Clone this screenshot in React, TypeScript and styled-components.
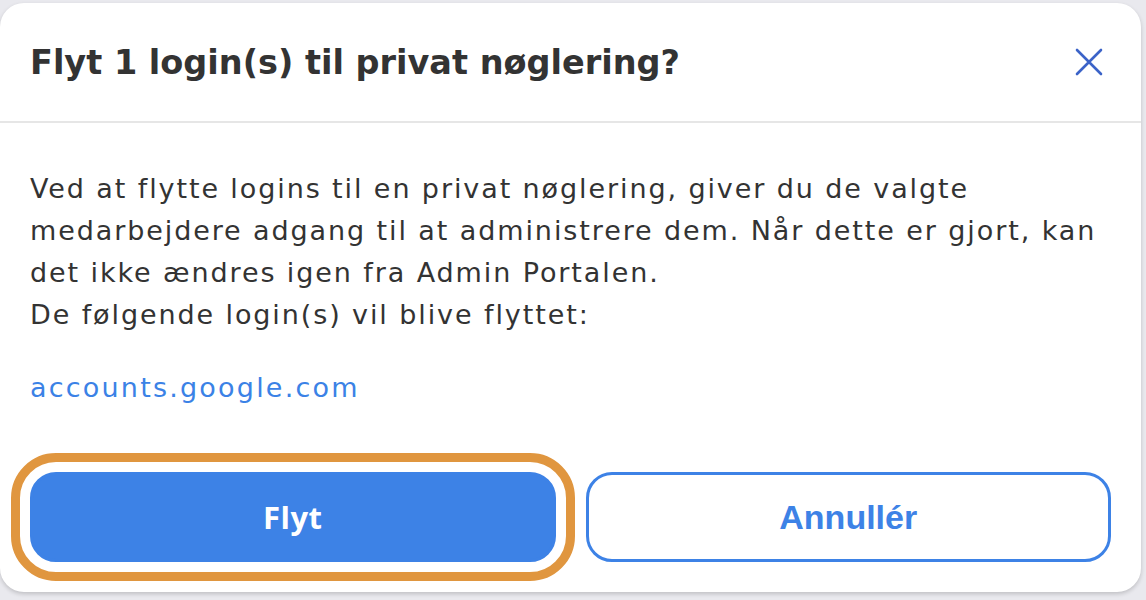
import React from "react";
import styled, { createGlobalStyle } from "styled-components";

const Global = createGlobalStyle`
  html, body { margin: 0; padding: 0; background: #e9e9ee; }
  body { font-family: "DejaVu Sans", "Open Sans", sans-serif; }
  * { box-sizing: border-box; }
`;

const Page = styled.div`
  width: 1146px;
  height: 600px;
  padding: 3px 5px 8px 0;
  display: flex;
`;

const Card = styled.div`
  flex: 1;
  background: #ffffff;
  border-radius: 24px;
  box-shadow: 0 2px 4px rgba(0, 0, 0, 0.18);
  display: flex;
  flex-direction: column;
`;

const Header = styled.div`
  height: 120px;
  border-bottom: 2px solid #e6e6e6;
  display: flex;
  align-items: center;
  justify-content: space-between;
  padding: 0 38px 0 30px;
`;

const Title = styled.h1`
  margin: 0;
  font-family: "DejaVu Sans", sans-serif;
  font-weight: 700;
  font-size: 33.5px;
  color: #333333;
`;

const CloseButton = styled.button`
  border: none;
  background: none;
  padding: 0;
  width: 28px;
  height: 28px;
  display: flex;
  align-items: center;
  justify-content: center;
  cursor: pointer;
`;

const Body = styled.div`
  padding: 45px 30px 30px 30px;
  display: flex;
  flex-direction: column;
  flex: 1;
`;

const Text = styled.p`
  margin: 0;
  font-family: "DejaVu Sans", sans-serif;
  font-size: 27px;
  line-height: 42px;
  letter-spacing: 1.9px;
  color: #333333;
  white-space: nowrap;
`;

const Link = styled.a`
  margin-top: 31px;
  align-self: flex-start;
  font-family: "DejaVu Sans", sans-serif;
  font-size: 27px;
  line-height: 42px;
  letter-spacing: 2.2px;
  color: #3b82e6;
  text-decoration: none;
`;

const Actions = styled.div`
  margin-top: auto;
  display: grid;
  grid-template-columns: 1fr 1fr;
  gap: 30px;
`;

const Button = styled.button<{ $primary?: boolean }>`
  height: 90px;
  border-radius: 26px;
  border: 3px solid #3d82e6;
  background: ${(p) => (p.$primary ? "#3d82e6" : "#ffffff")};
  color: ${(p) => (p.$primary ? "#ffffff" : "#3d82e6")};
  font-family: ${(p) => (p.$primary ? '"Open Sans", sans-serif' : '"Liberation Sans", Arial, sans-serif')};
  font-weight: 700;
  font-size: ${(p) => (p.$primary ? "31px" : "34px")};
  letter-spacing: ${(p) => (p.$primary ? "0.5px" : "0")};
  cursor: pointer;
  outline: ${(p) => (p.$primary ? "9px solid #e0963f" : "none")};
  outline-offset: 10px;
`;

export default function App() {
  return (
    <>
      <Global />
      <Page>
        <Card>
          <Header>
            <Title>Flyt 1 login(s) til privat nøglering?</Title>
            <CloseButton aria-label="Luk">
              <svg width="28" height="28" viewBox="0 0 28 28">
                <path d="M2 2 L26 26 M26 2 L2 26" stroke="#3b63c8" strokeWidth="2.6" strokeLinecap="round" />
              </svg>
            </CloseButton>
          </Header>
          <Body>
            <Text>
              Ved at flytte logins til en privat nøglering, giver du de valgte
              <br />
              medarbejdere adgang til at administrere dem. Når dette er gjort, kan
              <br />
              det ikke ændres igen fra Admin Portalen.
              <br />
              De følgende login(s) vil blive flyttet:
            </Text>
            <Link href="#">accounts.google.com</Link>
            <Actions>
              <Button $primary>Flyt</Button>
              <Button>Annullér</Button>
            </Actions>
          </Body>
        </Card>
      </Page>
    </>
  );
}
